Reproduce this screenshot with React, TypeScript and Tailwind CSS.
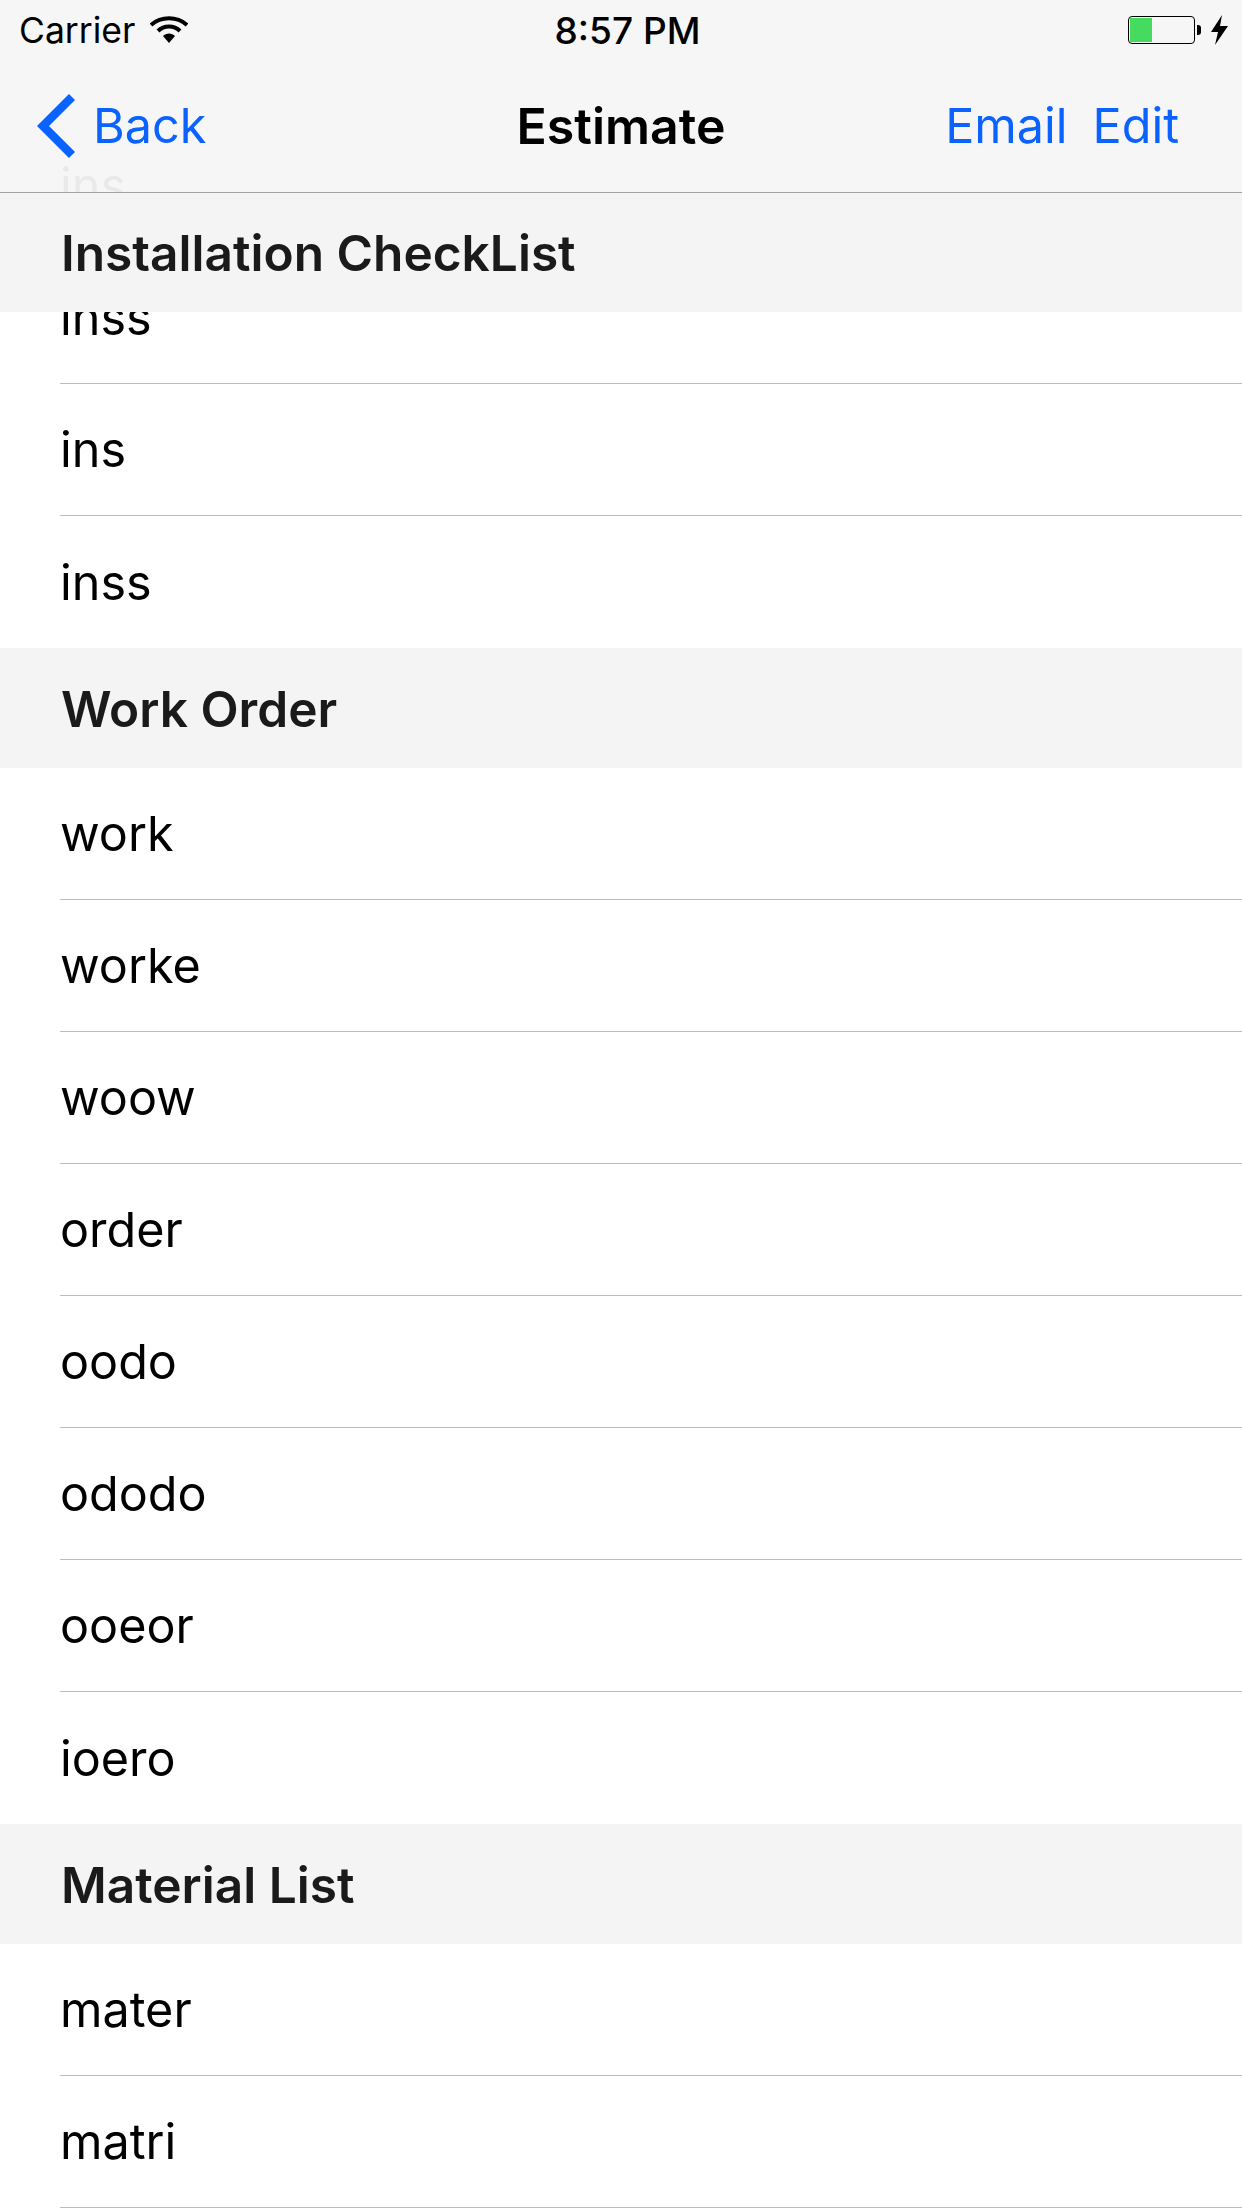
const SECTIONS = [
  { title: "Work Order", items: ["work", "worke", "woow", "order", "oodo", "ododo", "ooeor", "ioero"] },
  { title: "Material List", items: ["mater", "matri"] },
];

function Row({ label, last }: { label: string; last?: boolean }) {
  return (
    <div className="pl-[60px] bg-white">
      <div className={`h-[132px] pt-[2px] flex items-center text-[48.5px] text-black ${last ? "" : "border-b border-[#bcbbbf]"}`}>
        {label}
      </div>
    </div>
  );
}

function SectionHeader({ title, pinned }: { title: string; pinned?: boolean }) {
  return (
    <div className={`${pinned ? "h-[119px]" : "h-[120px]"} pt-[2px] bg-[#f4f4f4] pl-[61px] flex items-center text-[49.6px] font-semibold text-[#1a1a1a]`}>
      {title}
    </div>
  );
}

function Wifi() {
  return (
    <svg width="38" height="28" viewBox="0 0 38 28" className="ml-[15px]">
      <path d="M1 9 C11 0 27 0 37 9" fill="none" stroke="#000" strokeWidth="4" />
      <path d="M8 15 C14 9 24 9 30 15" fill="none" stroke="#000" strokeWidth="4" />
      <path d="M13 20 C16 16.5 22 16.5 25 20 L19 27 Z" fill="#000" />
    </svg>
  );
}

function Battery() {
  return (
    <div className="flex items-center">
      <div className="w-[67px] h-[28px] rounded-[4px] border-[1.5px] border-black p-[1px]">
        <div className="w-[22px] h-full bg-[#44db5e]" />
      </div>
      <div className="ml-[2px] w-[4px] h-[10px] bg-black rounded-r-[3px]" />
      <svg width="17" height="30" viewBox="0 0 17 30" className="ml-[10px]">
        <path d="M11 0 L0 17 L7 17 L4 30 L17 11 L9 11 Z" fill="#000" />
      </svg>
    </div>
  );
}

export default function App() {
  return (
    <div className="relative w-[1242px] h-[2208px] overflow-hidden bg-white font-['Inter','Liberation_Sans',sans-serif]">
      {/* nav bar, sits over the scrolled list */}
      <div className="absolute top-0 left-0 right-0 z-20">
        <div className="bg-[#f6f6f6]/95 border-b border-[#a3a3a3] h-[193px]">
          <div className="h-[60px] grid grid-cols-[1fr_auto_1fr] items-center pl-[19px] pr-[6px] text-black">
            <div className="flex items-center text-[35.5px]">
              <span className="pt-[2px]">Carrier</span>
              <Wifi />
            </div>
            <div className="pt-[2px] text-[37px] font-medium">8:57 PM</div>
            <div className="flex justify-end pr-[8px]">
              <Battery />
            </div>
          </div>
          <div className="h-[132px] grid grid-cols-[1fr_auto_1fr] items-center px-[37px] text-[48.5px] text-[#0b63ff]">
            <div className="flex items-center">
              <svg width="40" height="64" viewBox="0 0 40 64">
                <path d="M35 3 L6 32 L35 61" fill="none" stroke="#0b63ff" strokeWidth="8.5" />
              </svg>
              <span className="ml-[16px]">Back</span>
            </div>
            <div className="text-[50px] font-semibold text-black">Estimate</div>
            <div className="flex justify-end gap-[25px] pr-[26px]">
              <span>Email</span>
              <span>Edit</span>
            </div>
          </div>
        </div>
        <SectionHeader title="Installation CheckList" pinned />
      </div>

      {/* table, scrolled up under the bars */}
      <div className="pt-[120px]">
        <Row label="ins" />
        <Row label="inss" />
        <Row label="ins" />
        <Row label="inss" last />
        {SECTIONS.map((s) => (
          <div key={s.title}>
            <SectionHeader title={s.title} />
            {s.items.map((item, i) => (
              <Row key={item} label={item} last={s.title === "Work Order" && i === s.items.length - 1} />
            ))}
          </div>
        ))}
      </div>
    </div>
  );
}
